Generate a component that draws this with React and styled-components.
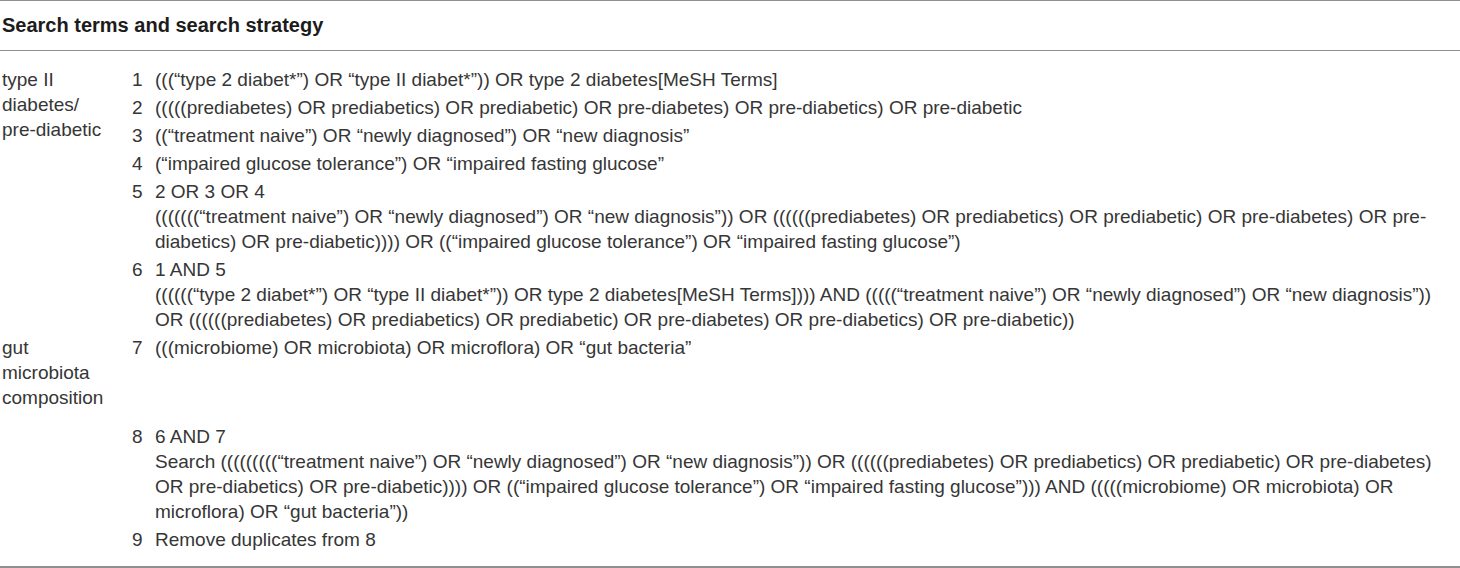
import React from "react";
import styled, { createGlobalStyle } from "styled-components";

const GlobalStyle = createGlobalStyle`
  html, body {
    margin: 0;
    padding: 0;
    background: #ffffff;
  }
  body {
    font-family: "Liberation Sans", Arial, Helvetica, sans-serif;
    color: #363636;
  }
`;

// label cells cover several strategy rows, so each carries its rowSpan
const rows = [
  {
    label: ["type II", "diabetes/", "pre-diabetic"],
    span: 6,
    num: 1,
    lines: ["(((\u201ctype 2 diabet*\u201d) OR \u201ctype II diabet*\u201d)) OR type 2 diabetes[MeSH Terms]"],
  },
  {
    num: 2,
    lines: ["(((((prediabetes) OR prediabetics) OR prediabetic) OR pre-diabetes) OR pre-diabetics) OR pre-diabetic"],
  },
  {
    num: 3,
    lines: ["((\u201ctreatment naive\u201d) OR \u201cnewly diagnosed\u201d) OR \u201cnew diagnosis\u201d"],
  },
  {
    num: 4,
    lines: ["(\u201cimpaired glucose tolerance\u201d) OR \u201cimpaired fasting glucose\u201d"],
  },
  {
    num: 5,
    lines: [
      "2 OR 3 OR 4",
      "(((((((\u201ctreatment naive\u201d) OR \u201cnewly diagnosed\u201d) OR \u201cnew diagnosis\u201d)) OR ((((((prediabetes) OR prediabetics) OR prediabetic) OR pre-diabetes) OR pre-",
      "diabetics) OR pre-diabetic)))) OR ((\u201cimpaired glucose tolerance\u201d) OR \u201cimpaired fasting glucose\u201d)",
    ],
  },
  {
    num: 6,
    lines: [
      "1 AND 5",
      "((((((\u201ctype 2 diabet*\u201d) OR \u201ctype II diabet*\u201d)) OR type 2 diabetes[MeSH Terms]))) AND (((((\u201ctreatment naive\u201d) OR \u201cnewly diagnosed\u201d) OR \u201cnew diagnosis\u201d))",
      "OR ((((((prediabetes) OR prediabetics) OR prediabetic) OR pre-diabetes) OR pre-diabetics) OR pre-diabetic))",
    ],
  },
  {
    label: ["gut", "microbiota", "composition"],
    span: 1,
    num: 7,
    lines: ["(((microbiome) OR microbiota) OR microflora) OR \u201cgut bacteria\u201d"],
    extra: 11,
  },
  {
    label: [],
    span: 2,
    num: 8,
    lines: [
      "6 AND 7",
      "Search (((((((((\u201ctreatment naive\u201d) OR \u201cnewly diagnosed\u201d) OR \u201cnew diagnosis\u201d)) OR ((((((prediabetes) OR prediabetics) OR prediabetic) OR pre-diabetes)",
      "OR pre-diabetics) OR pre-diabetic)))) OR ((\u201cimpaired glucose tolerance\u201d) OR \u201cimpaired fasting glucose\u201d))) AND (((((microbiome) OR microbiota) OR",
      "microflora) OR \u201cgut bacteria\u201d))",
    ],
  },
  {
    num: 9,
    lines: ["Remove duplicates from 8"],
    extra: 13,
  },
];

const Table = styled.table`
  width: 1460px;
  border-collapse: collapse;
  border-top: 1px solid #8f8f8f;
  border-bottom: 2px solid #8f8f8f;
  font-size: 19px;
  line-height: 25px;
`;

const HeadCell = styled.th`
  text-align: left;
  font-size: 20px;
  font-weight: bold;
  color: #1c1c1c;
  padding: 12px 2px 12px;
  border-bottom: 1px solid #8f8f8f;
  white-space: nowrap;
`;

const Cell = styled.td`
  vertical-align: top;
  padding-top: ${(p) => (p.$first ? "15.5px" : "1.5px")};
  padding-bottom: ${(p) => 1.5 + (p.$extra || 0)}px;
  padding-right: 0;
  color: #363636;
`;

const LabelCell = styled(Cell)`
  width: 128px;
  padding-left: 2px;
`;

const NumCell = styled(Cell)`
  width: 23px;
  padding-left: 2px;
`;

const TextCell = styled(Cell)`
  padding-left: 0;
  white-space: nowrap;
`;

const Line = styled.div``;

export default function App() {
  return (
    <>
      <GlobalStyle />
      <Table>
        <thead>
          <tr>
            <HeadCell colSpan={3}>Search terms and search strategy</HeadCell>
          </tr>
        </thead>
        <tbody>
          {rows.map((row, i) => {
            const first = i === 0;
            return (
              <tr key={row.num}>
                {row.label && (
                  <LabelCell $first={first} $extra={row.extra} rowSpan={row.span}>
                    {row.label.map((l) => (
                      <Line key={l}>{l}</Line>
                    ))}
                  </LabelCell>
                )}
                <NumCell $first={first} $extra={row.extra}>
                  {row.num}
                </NumCell>
                <TextCell $first={first} $extra={row.extra}>
                  {row.lines.map((l, j) => (
                    <Line key={j}>{l}</Line>
                  ))}
                </TextCell>
              </tr>
            );
          })}
        </tbody>
      </Table>
    </>
  );
}
